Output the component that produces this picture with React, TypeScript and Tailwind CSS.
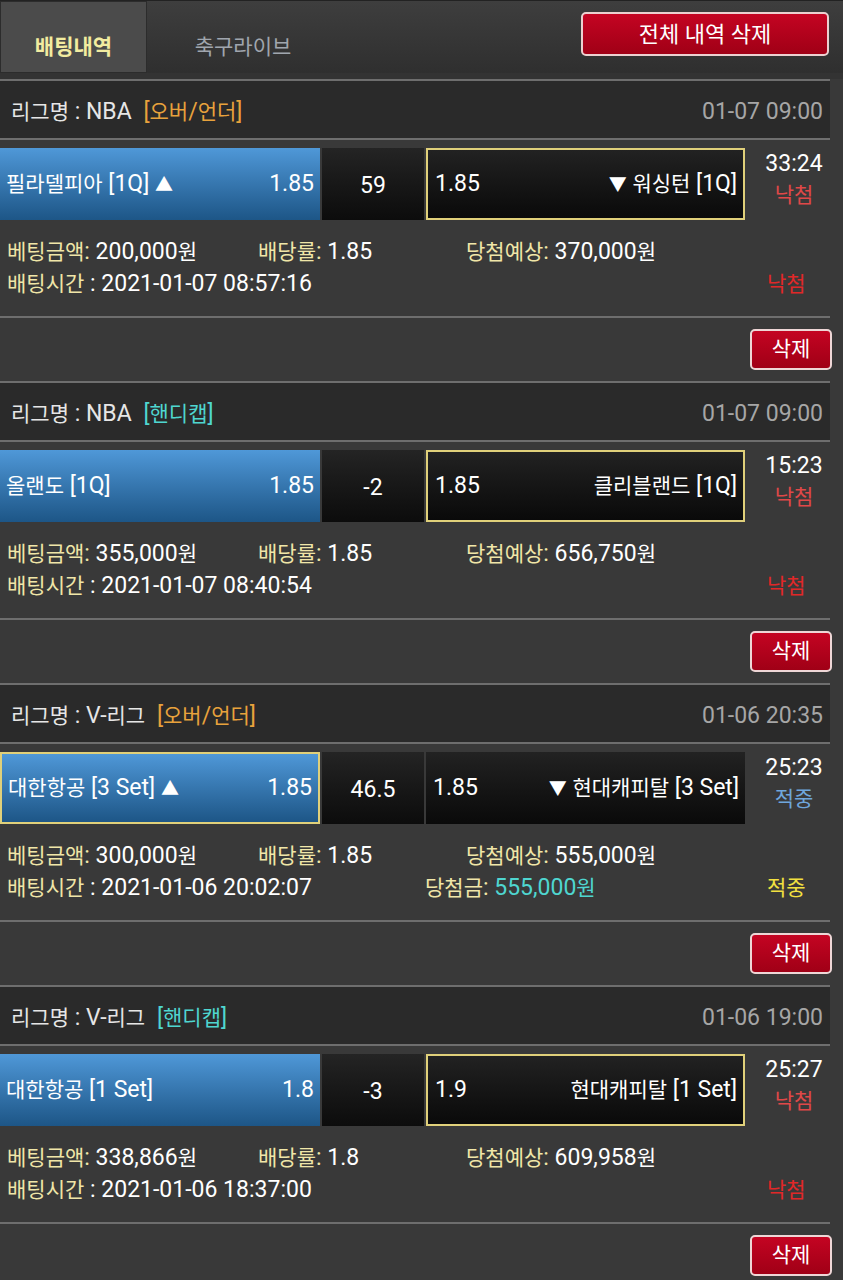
import React from 'react'

type Bet = {
  league: string
  type: string
  typeColor: string
  date: string
  home: string
  homeOdds: string
  line: string
  away: string
  awayOdds: string
  pick: 'home' | 'away'
  time: string
  result: '낙첨' | '적중'
  amount: string
  rate: string
  expected: string
  betTime: string
  won?: string
}

const bets: Bet[] = [
  {
    league: 'NBA',
    type: '[오버/언더]',
    typeColor: 'text-[#e8a23c]',
    date: '01-07 09:00',
    home: '필라델피아 [1Q] ▲',
    homeOdds: '1.85',
    line: '59',
    away: '▼ 워싱턴 [1Q]',
    awayOdds: '1.85',
    pick: 'away',
    time: '33:24',
    result: '낙첨',
    amount: '200,000원',
    rate: '1.85',
    expected: '370,000원',
    betTime: '2021-01-07 08:57:16',
  },
  {
    league: 'NBA',
    type: '[핸디캡]',
    typeColor: 'text-[#4fd6d0]',
    date: '01-07 09:00',
    home: '올랜도 [1Q]',
    homeOdds: '1.85',
    line: '-2',
    away: '클리블랜드 [1Q]',
    awayOdds: '1.85',
    pick: 'away',
    time: '15:23',
    result: '낙첨',
    amount: '355,000원',
    rate: '1.85',
    expected: '656,750원',
    betTime: '2021-01-07 08:40:54',
  },
  {
    league: 'V-리그',
    type: '[오버/언더]',
    typeColor: 'text-[#e8a23c]',
    date: '01-06 20:35',
    home: '대한항공 [3 Set] ▲',
    homeOdds: '1.85',
    line: '46.5',
    away: '▼ 현대캐피탈 [3 Set]',
    awayOdds: '1.85',
    pick: 'home',
    time: '25:23',
    result: '적중',
    amount: '300,000원',
    rate: '1.85',
    expected: '555,000원',
    betTime: '2021-01-06 20:02:07',
    won: '555,000원',
  },
  {
    league: 'V-리그',
    type: '[핸디캡]',
    typeColor: 'text-[#4fd6d0]',
    date: '01-06 19:00',
    home: '대한항공 [1 Set]',
    homeOdds: '1.8',
    line: '-3',
    away: '현대캐피탈 [1 Set]',
    awayOdds: '1.9',
    pick: 'away',
    time: '25:27',
    result: '낙첨',
    amount: '338,866원',
    rate: '1.8',
    expected: '609,958원',
    betTime: '2021-01-06 18:37:00',
  },
]

const font = { fontFamily: 'Roboto, "Noto Sans CJK KR", sans-serif' }

// hangul runs render a bit smaller than the latin text, like on the phone
function T({ s }: { s: string }) {
  return (
    <>
      {s.split(/([가-힣]+|[▲▼])/).map((part, i) =>
        /[▲▼]/.test(part) ? (
          <span key={i} className="text-[18px]">
            {part}
          </span>
        ) : /[가-힣]/.test(part) ? (
          <span key={i} className="text-[21px]">
            {part}
          </span>
        ) : (
          part
        )
      )}
    </>
  )
}

function BetCard({ bet }: { bet: Bet }) {
  const lost = bet.result === '낙첨'
  return (
    <section>
      <div className="mr-[13px] flex h-[61px] items-center justify-between border-y-2 border-[#6e6e6e] bg-[#2a2a2a] pl-[11px] pr-[7px] pt-[5px] text-[23px]">
        <div className="text-[#e6e6e6]">
          <T s={`리그명 : ${bet.league}`} />{' '}
          <span className={`ml-[6px] ${bet.typeColor}`}>
            <T s={bet.type} />
          </span>
        </div>
        <div className="text-[#a6a6a6]">{bet.date}</div>
      </div>

      <div className="mt-2 flex h-[72px] text-[23px] text-white">
        <div
          className={`flex w-[320px] items-center justify-between bg-gradient-to-b from-[#4f98d8] to-[#1d5687] pl-[6px] pr-[6px] ${
            bet.pick === 'home' ? 'border-2 border-[#e0d07a]' : ''
          }`}
        >
          <span>
            <T s={bet.home} />
          </span>
          <span>{bet.homeOdds}</span>
        </div>
        <div className="ml-[2px] flex w-[102px] items-center justify-center bg-gradient-to-b from-[#242424] to-[#0c0c0c] pt-[5px]">
          {bet.line}
        </div>
        <div
          className={`ml-[2px] flex w-[319px] items-center justify-between bg-gradient-to-b from-[#222222] to-[#0a0a0a] pl-[7px] pr-[6px] ${
            bet.pick === 'away' ? 'border-2 border-[#e0d07a]' : ''
          }`}
        >
          <span>{bet.awayOdds}</span>
          <span>
            <T s={bet.away} />
          </span>
        </div>
        <div className="flex flex-1 flex-col items-center pt-0 leading-[31px]">
          <span>{bet.time}</span>
          <span className={lost ? 'text-[#e04848]' : 'text-[#6fa6dc]'}>
            <T s={bet.result} />
          </span>
        </div>
      </div>

      <div className="h-[96px] pl-[7px] pt-[16px] text-[23px] leading-[31px] text-white">
        <div className="flex">
          <span className="w-[251px]">
            <span className="text-[#f0e6a8]">
              <T s="베팅금액:" />
            </span>{' '}
            <T s={bet.amount} />
          </span>
          <span className="w-[208px]">
            <span className="text-[#f0e6a8]">
              <T s="배당률:" />
            </span>{' '}
            {bet.rate}
          </span>
          <span>
            <span className="text-[#f0e6a8]">
              <T s="당첨예상:" />
            </span>{' '}
            <T s={bet.expected} />
          </span>
        </div>
        <div className="flex">
          <span className="w-[418px]">
            <span className="text-[#f0e6a8]">
              <T s="배팅시간" />
            </span>{' '}
            : {bet.betTime}
          </span>
          <span className="flex-1">
            {bet.won && (
              <>
                <span className="text-[#f0e6a8]">
                  <T s="당첨금:" />
                </span>{' '}
                <span className="text-[#4fd6d0]">
                  <T s={bet.won} />
                </span>
              </>
            )}
          </span>
          <span className={`w-[76px] ${lost ? 'text-[#e02828]' : 'text-[#f2e040]'}`}>
            <T s={bet.result} />
          </span>
        </div>
      </div>

      <div className="mr-[13px] h-[2px] bg-[#6e6e6e]" />

      <div className="flex h-[63px] items-center justify-end pr-[11px]">
        <button
          type="button"
          className="h-[41px] w-[82px] rounded-[5px] border-2 border-[#eed6d6] bg-gradient-to-b from-[#c40422] to-[#a00016] text-[21px] text-white"
        >
          삭제
        </button>
      </div>
    </section>
  )
}

export default function App() {
  return (
    <main className="min-h-screen w-[843px] overflow-hidden bg-[#393939]" style={font}>
      <div className="flex h-[73px] items-stretch border-t border-[#222] bg-gradient-to-b from-[#3e3e3e] to-[#2f2f2f]">
        <div className="flex w-[147px] items-center justify-center border border-[#2c2c2c] bg-[#4b4b4b] pt-[22px] text-[21px] font-bold text-[#f2eca0]">
          배팅내역
        </div>
        <div className="flex w-[192px] items-center justify-center pt-[22px] text-[21px] text-[#a0a6ae]">축구라이브</div>
        <div className="flex flex-1 items-start justify-end pr-[14px] pt-[11px]">
          <button
            type="button"
            className="h-[44px] w-[248px] rounded-[5px] border-2 border-[#ecd0d0] bg-gradient-to-b from-[#c40422] to-[#a00016] text-[22px] text-white"
          >
            전체 내역 삭제
          </button>
        </div>
      </div>
      <div className="h-[6px] bg-[#333]" />
      {bets.map((bet, i) => (
        <BetCard key={i} bet={bet} />
      ))}
    </main>
  )
}
